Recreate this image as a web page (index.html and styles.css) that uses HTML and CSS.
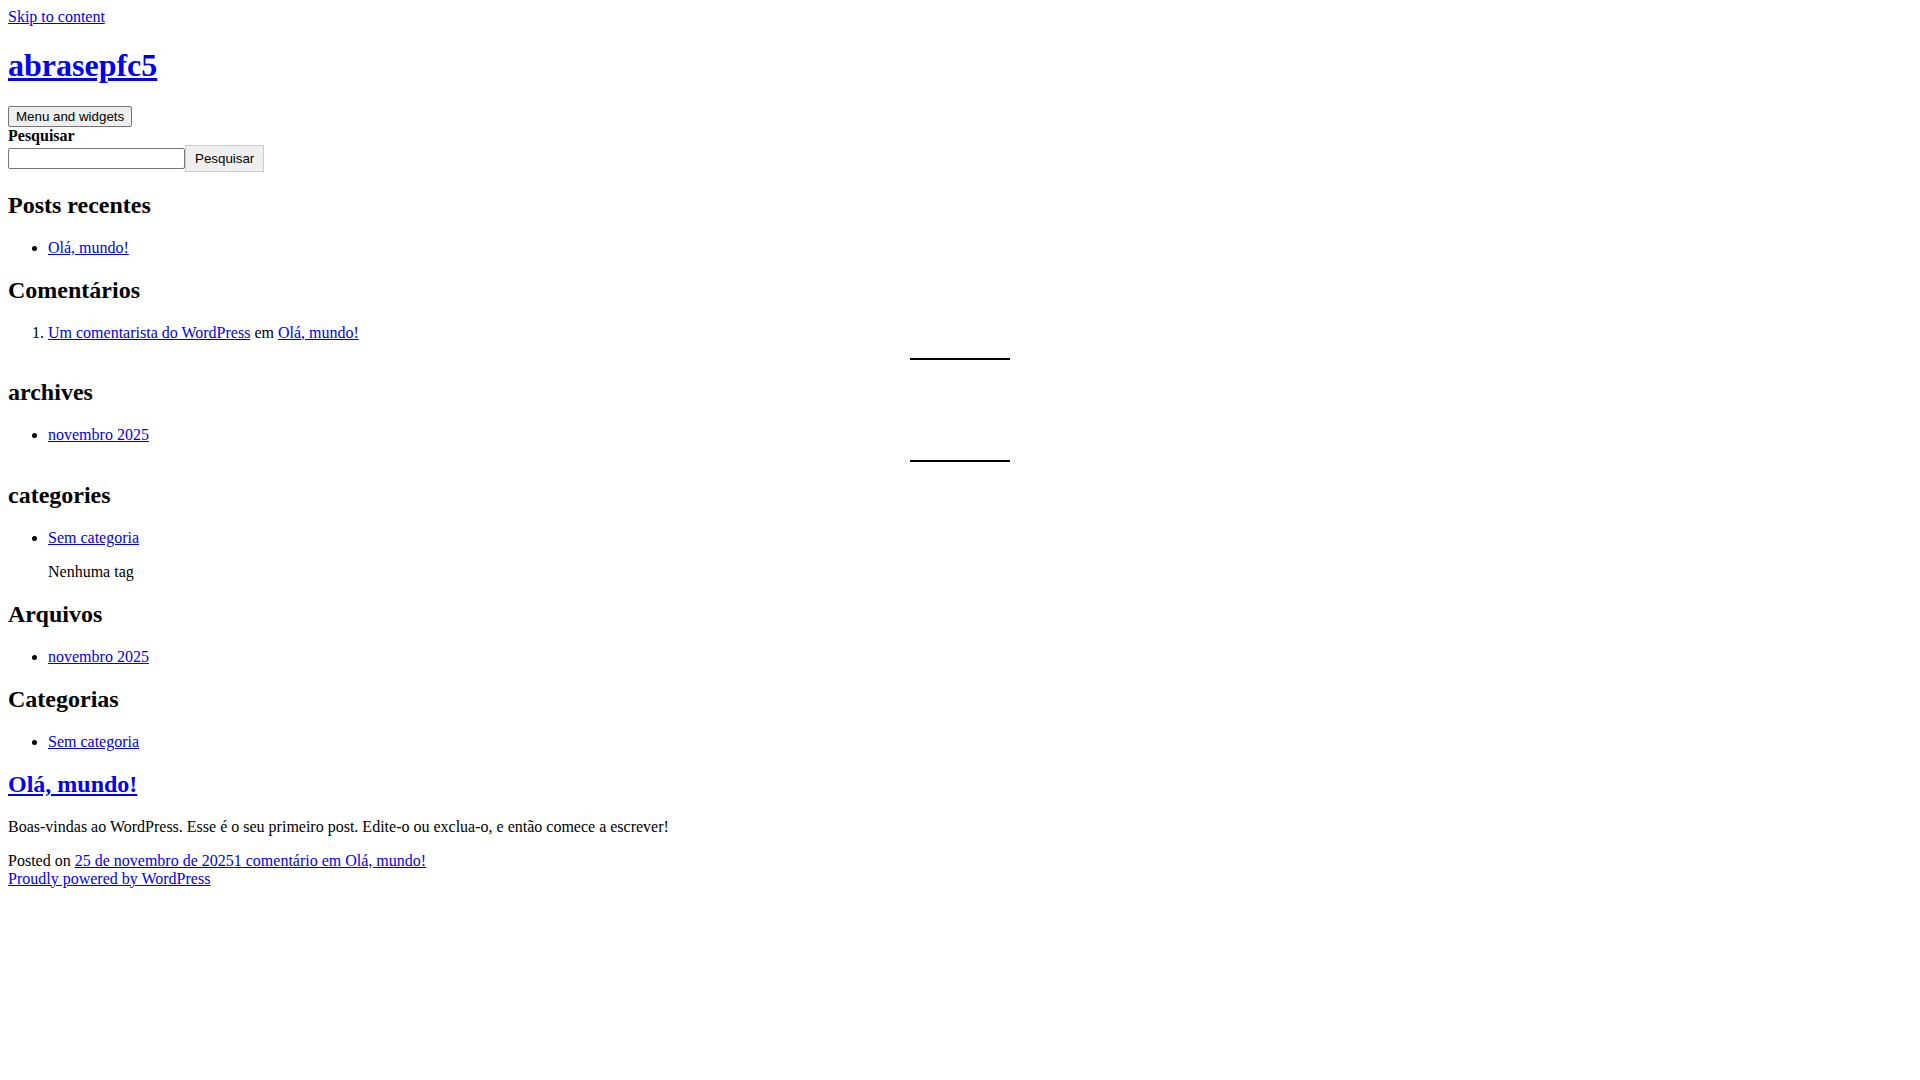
FILE: index.html
```html
<!DOCTYPE html>
<html lang="pt-BR">
<head>
<meta charset="utf-8">
<title>abrasepfc5</title>
<link rel="stylesheet" href="styles.css">
</head>
<body>
<a class="skip" href="#content">Skip to content</a>
<header>
<h1 class="site-title"><a href="#">abrasepfc5</a></h1>
<button class="menu-toggle" type="button">Menu and widgets</button>
</header>
<aside>
<form class="search">
<label class="search-label">Pesquisar</label>
<div class="search-row"><input class="search-input" type="search"><button class="search-btn" type="button">Pesquisar</button></div>
</form>
<h2>Posts recentes</h2>
<ul><li><a href="#">Olá, mundo!</a></li></ul>
<h2>Comentários</h2>
<ol><li><a href="#">Um comentarista do WordPress</a> em <a href="#">Olá, mundo!</a></li></ol>
<hr class="sep">
<h2>archives</h2>
<ul><li><a href="#">novembro 2025</a></li></ul>
<hr class="sep">
<h2>categories</h2>
<ul><li><a href="#">Sem categoria</a></li></ul>
<p class="tags">Nenhuma tag</p>
<h2>Arquivos</h2>
<ul><li><a href="#">novembro 2025</a></li></ul>
<h2>Categorias</h2>
<ul><li><a href="#">Sem categoria</a></li></ul>
</aside>
<main id="content">
<article>
<h2><a href="#">Olá, mundo!</a></h2>
<p>Boas-vindas ao WordPress. Esse é o seu primeiro post. Edite-o ou exclua-o, e então comece a escrever!</p>
<div class="meta">Posted on <a href="#">25 de novembro de 2025</a><a href="#">1 comentário em Olá, mundo!</a></div>
</article>
</main>
<footer><a href="#">Proudly powered by WordPress</a></footer>
</body>
</html>
```
FILE: styles.css
```css
body {
  margin: 8px;
  font-family: "Liberation Serif", "Times New Roman", serif;
  font-size: 16px;
  color: #000;
  background: #fff;
}
a { color: #0000ee; }
.skip { display: inline; }
.site-title { font-size: 32px; margin: 21.44px 0; }
.menu-toggle,
.search-btn {
  font-family: "Liberation Sans", Arial, sans-serif;
  font-size: 13.333px;
  line-height: 15px;
  color: #000;
}
.menu-toggle {
  display: block;
  background: #efefef;
  border: 1px solid #767676;
  border-radius: 2px;
  padding: 2px 7px;
  height: 21px;
  box-sizing: border-box;
}
.search { margin: 0; }
.search-label { display: block; font-weight: bold; }
.search-row { display: flex; align-items: flex-end; }
.search-input {
  width: 177px;
  height: 21px;
  box-sizing: border-box;
  border: 1px solid #767676;
  border-radius: 2px;
  margin: 0 0 3px 0;
  padding: 1px 2px;
}
.search-btn {
  background: #efefef;
  border: 1px solid #ccc;
  padding: 5px 9px;
  margin: 0;
  height: 27px;
  box-sizing: border-box;
}
h2 { font-size: 24px; margin: 19.92px 0; }
ul, ol { margin: 16px 0; padding-left: 40px; }
.sep {
  width: 100px;
  border: none;
  border-bottom: 2px solid #000;
  margin: 8px auto;
}
.tags { margin: 16px 0 16px 40px; }
p { margin: 16px 0; }
.meta { margin: 0; }
```
